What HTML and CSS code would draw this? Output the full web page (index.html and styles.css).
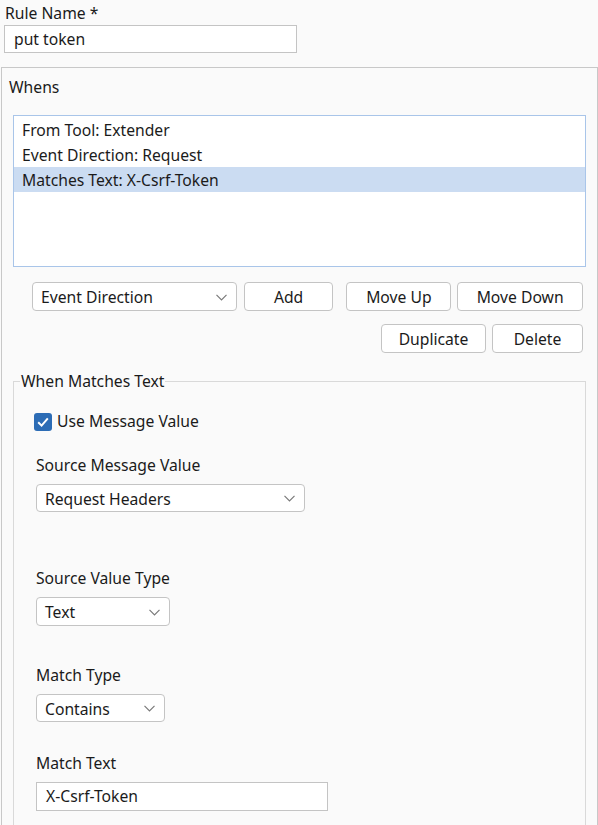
FILE: index.html
```html
<!DOCTYPE html>
<html>
<head>
<meta charset="utf-8">
<link rel="stylesheet" href="styles.css">
</head>
<body>
<div class="rule-name">
  <div class="label top-label">Rule Name *</div>
  <div class="textbox name-box">put token</div>
</div>
<div class="panel">
  <div class="label whens-label">Whens</div>
  <div class="list">
    <div class="list-item">From Tool: Extender</div>
    <div class="list-item">Event Direction: Request</div>
    <div class="list-item selected">Matches Text: X-Csrf-Token</div>
  </div>
  <div class="btn-row row1">
    <div class="combo combo-event"><span>Event Direction</span><svg class="chev" width="11" height="7" viewBox="0 0 11 7"><path d="M0.5 0.8 L5.5 5.8 L10.5 0.8" fill="none" stroke="#7a7a7a" stroke-width="1.2"/></svg></div>
    <div class="btn btn-add">Add</div>
    <div class="btn btn-up">Move Up</div>
    <div class="btn btn-down">Move Down</div>
  </div>
  <div class="btn-row row2">
    <div class="btn btn-dup">Duplicate</div>
    <div class="btn btn-del">Delete</div>
  </div>
  <fieldset class="group">
    <legend class="group-title">When Matches Text</legend>
    <div class="group-body">
      <div class="check-row">
        <span class="checkbox"><svg width="18" height="18" viewBox="0 0 18 18"><path d="M4.2 9.2 L7.6 12.6 L13.8 5.4" fill="none" stroke="#fff" stroke-width="2"/></svg></span>
        <span class="label">Use Message Value</span>
      </div>
      <div class="label f-label l-smv">Source Message Value</div>
      <div class="combo combo-smv"><span>Request Headers</span><svg class="chev" width="11" height="7" viewBox="0 0 11 7"><path d="M0.5 0.8 L5.5 5.8 L10.5 0.8" fill="none" stroke="#7a7a7a" stroke-width="1.2"/></svg></div>
      <div class="label f-label l-svt">Source Value Type</div>
      <div class="combo combo-svt"><span>Text</span><svg class="chev" width="11" height="7" viewBox="0 0 11 7"><path d="M0.5 0.8 L5.5 5.8 L10.5 0.8" fill="none" stroke="#7a7a7a" stroke-width="1.2"/></svg></div>
      <div class="label f-label l-mt">Match Type</div>
      <div class="combo combo-mt"><span>Contains</span><svg class="chev" width="11" height="7" viewBox="0 0 11 7"><path d="M0.5 0.8 L5.5 5.8 L10.5 0.8" fill="none" stroke="#7a7a7a" stroke-width="1.2"/></svg></div>
      <div class="label f-label l-mtx">Match Text</div>
      <div class="textbox mt-box">X-Csrf-Token</div>
    </div>
  </fieldset>
</div>
</body>
</html>
```
FILE: styles.css
```css
html, body {
  margin: 0;
  padding: 0;
  background: #fafafa;
  height: 825px;
  overflow: hidden;
}
body {
  font-family: "Noto Sans", "Open Sans", sans-serif;
  font-size: 15.7px;
  color: #1b1b1b;
}
.label {
  line-height: 19px;
  white-space: nowrap;
}
.rule-name {
  padding: 4px 0 0 5px;
}
.textbox {
  box-sizing: border-box;
  background: #fff;
  border: 1px solid #c4c4c4;
  line-height: 27px;
  padding-left: 9px;
  white-space: nowrap;
}
.name-box {
  margin-top: 2px;
  margin-left: -1px;
  width: 293px;
  height: 28px;
}
.panel {
  margin: 14px 0 0 1px;
  width: 597px;
  box-sizing: border-box;
  border: 1px solid #c8c8c8;
  border-bottom: none;
  padding: 10px 11px 0 11px;
  height: 758px;
  overflow: hidden;
}
.whens-label {
  margin-left: -4px;
}
.list {
  margin-top: 18px;
  height: 152px;
  box-sizing: border-box;
  border: 1px solid #a9c5e9;
  background: #fff;
  padding-top: 1px;
}
.list-item {
  height: 25px;
  line-height: 26px;
  padding-left: 8px;
  white-space: nowrap;
}
.list-item.selected {
  background: #cbdcf2;
}
.btn-row {
  display: flex;
  align-items: center;
  padding: 0 3px 0 19px;
}
.row1 {
  margin-top: 15px;
}
.row2 {
  margin-top: 13px;
  justify-content: flex-end;
}
.combo, .btn {
  box-sizing: border-box;
  height: 29px;
  background: #fff;
  border: 1px solid #c4c4c4;
  border-radius: 4px;
  white-space: nowrap;
  padding-top: 1px;
}
.combo {
  display: flex;
  align-items: center;
  justify-content: space-between;
  padding-left: 8px;
  padding-right: 9px;
}
.btn {
  display: flex;
  align-items: center;
  justify-content: center;
}
.combo-event { width: 205px; }
.btn-add { width: 90px; margin-left: 7px; }
.btn-up { width: 105px; margin-left: 13px; }
.btn-down { width: 126px; margin-left: 6px; }
.btn-dup { width: 105px; }
.btn-del { width: 91px; margin-left: 6px; }
.group {
  margin: 19px 0 0 0;
  padding: 0 0 0 6px;
  border: 1px solid #d9d9d9;
  border-bottom: none;
  height: 460px;
}
.group-title {
  padding: 0 1px;
  line-height: 19px;
}
.group-body {
  padding: 21px 0 0 16px;
}
.check-row {
  display: flex;
  align-items: center;
  gap: 5px;
  margin-left: -2px;
  height: 19px;
}
.checkbox {
  width: 18px;
  height: 18px;
  box-sizing: border-box;
  background: #2c6cb5;
  border-radius: 3px;
  display: flex;
}
.f-label { margin-bottom: 9px; padding-top: 1px; }
.l-smv { margin-top: 24px; }
.l-svt { margin-top: 56px; }
.l-mt { margin-top: 39px; }
.l-mtx { margin-top: 31px; }
.combo-smv { width: 269px; height: 28px; }
.combo-svt { width: 134px; }
.combo-mt { width: 129px; height: 28px; }
.mt-box { width: 292px; height: 29px; }
```
